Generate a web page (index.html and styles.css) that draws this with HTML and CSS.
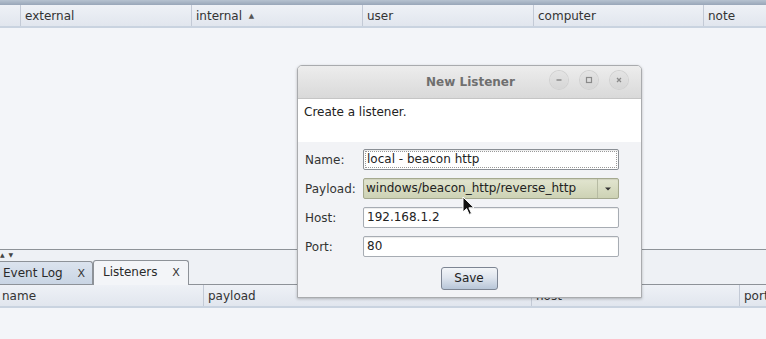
FILE: index.html
```html
<!DOCTYPE html>
<html>
<head>
<meta charset="utf-8">
<link rel="stylesheet" href="styles.css">
</head>
<body>
<div class="app">
  <div class="topstrip"></div>
  <div class="thead top">
    <div class="col c0"></div>
    <div class="col c1">external</div>
    <div class="col c2">internal <span class="sort">▲</span></div>
    <div class="col c3">user</div>
    <div class="col c4">computer</div>
    <div class="col c5">note</div>
  </div>
  <div class="upper"></div>
  <div class="splitter"><span class="arrows">▲ ▼</span></div>
  <div class="tabs">
    <div class="tab inactive">Event Log <span class="x">X</span></div>
    <div class="tab active">Listeners <span class="x">X</span></div>
  </div>
  <div class="thead bottom">
    <div class="col d1">name</div>
    <div class="col d2">payload</div>
    <div class="col d3">host</div>
    <div class="col d4">port</div>
  </div>
  <div class="lower"></div>
</div>

<div class="dialog">
  <div class="titlebar">
    <div class="title">New Listener</div>
    <div class="wbtns">
      <span class="wbtn"><svg width="10" height="10" viewBox="0 0 10 10"><path d="M2.5 5h5" stroke="#8a8a8a" stroke-width="1.4"/></svg></span>
      <span class="wbtn"><svg width="10" height="10" viewBox="0 0 10 10"><rect x="2.5" y="2.5" width="5" height="5" fill="none" stroke="#8a8a8a" stroke-width="1.2"/></svg></span>
      <span class="wbtn"><svg width="10" height="10" viewBox="0 0 10 10"><path d="M3 3l4 4M7 3l-4 4" stroke="#8a8a8a" stroke-width="1.3"/></svg></span>
    </div>
  </div>
  <div class="desc">Create a listener.</div>
  <div class="form">
    <div class="row"><span class="lbl">Name:</span><span class="field focus">local - beacon http</span></div>
    <div class="row"><span class="lbl">Payload:</span><span class="field combo">windows/beacon_http/reverse_http<span class="drop"><svg width="8" height="6" viewBox="0 0 8 6"><path d="M1 1.5h6L4 4.5z" fill="#333"/></svg></span></span></div>
    <div class="row"><span class="lbl">Host:</span><span class="field">192.168.1.2</span></div>
    <div class="row"><span class="lbl">Port:</span><span class="field">80</span></div>
    <div class="actions"><span class="btn">Save</span></div>
  </div>
</div>

<svg class="cursor" width="14" height="20" viewBox="0 0 14 20"><path d="M1 1v15l3.6-3.4 2.6 5.8 2.3-1-2.6-5.6H12z" fill="#111" stroke="#fff" stroke-width="1"/></svg>
</body>
</html>
```

FILE: styles.css
```css
html, body {
  margin: 0;
  padding: 0;
}
body {
  width: 766px;
  height: 339px;
  overflow: hidden;
  background: #f2f4f8;
  font-family: "DejaVu Sans", "Liberation Sans", sans-serif;
  font-size: 12px;
  color: #2a2a2a;
  position: relative;
}
.app {
  display: flex;
  flex-direction: column;
  height: 339px;
}
.topstrip {
  height: 5px;
  background: linear-gradient(#b6c2d0, #98a6b8);
  flex: none;
}
.thead {
  display: flex;
  flex: none;
  background: linear-gradient(#eef1f6, #e1e6ee);
  border-bottom: 2px solid #c9d3e0;
  box-sizing: border-box;
}
.thead.top { height: 23px; }
.thead.bottom { height: 23px; }
.col {
  box-sizing: border-box;
  border-right: 1px solid #c3cad6;
  padding-left: 4px;
  line-height: 23px;
  white-space: nowrap;
  overflow: hidden;
  color: #333;
}
.c0 { width: 21px; }
.c1 { width: 171px; }
.c2 { width: 171px; }
.c3 { width: 171px; }
.c4 { width: 170px; }
.c5 { flex: 1; border-right: none; }
.sort { font-size: 7px; color: #555; position: relative; top: -2px; margin-left: 3px; }
.d1 { width: 204px; padding-left: 2px; }
.d2 { width: 328px; }
.d3 { width: 208px; }
.d4 { flex: 1; border-right: none; }
.upper {
  height: 221px;
  flex: none;
  background: #f3f5f9;
  border-bottom: 1px solid #8d9298;
}
.splitter {
  height: 9px;
  flex: none;
  background: #eef1f5;
  position: relative;
}
.arrows {
  font-size: 6px;
  color: #444;
  position: absolute;
  left: 0;
  top: 1px;
  letter-spacing: 1px;
}
.tabs {
  height: 26px;
  flex: none;
  display: flex;
  align-items: flex-end;
  background: #eef1f5;
  border-bottom: 1px solid #8d9298;
  box-sizing: border-box;
}
.tab {
  box-sizing: border-box;
  height: 24px;
  line-height: 22px;
  padding-left: 3px;
  border: 1px solid #8d9298;
  border-bottom: none;
  border-radius: 3px 3px 0 0;
  white-space: nowrap;
}
.tab.inactive {
  width: 93px;
  height: 23px;
  background: linear-gradient(#dbe3ee, #c9d5e4);
  border-left: none;
  border-radius: 0 3px 0 0;
}
.tab.active {
  width: 96px;
  height: 25px;
  padding-left: 9px;
  background: #f3f5f8;
  margin-bottom: -1px;
}
.x { margin-left: 11px; font-size: 11px; color: #333; }
.lower {
  flex: 1;
  background: #f3f5f9;
}

.dialog {
  position: absolute;
  left: 297px;
  top: 65px;
  width: 345px;
  height: 233px;
  box-sizing: border-box;
  border: 1px solid #a9abae;
  border-radius: 5px 5px 0 0;
  background: #f2f3f6;
  box-shadow: 0 1px 3px rgba(0,0,0,0.25);
  display: flex;
  flex-direction: column;
  overflow: hidden;
}
.titlebar {
  height: 32px;
  flex: none;
  background: linear-gradient(#ededed, #d9d9d9);
  border-bottom: 1px solid #c5c5c5;
  position: relative;
  display: flex;
  align-items: center;
  justify-content: center;
}
.title {
  font-weight: bold;
  color: #6f6f6f;
  font-size: 12px;
  margin-left: 2px;
}
.wbtns {
  position: absolute;
  right: 13px;
  top: 5px;
  display: flex;
  gap: 12px;
}
.wbtn {
  width: 18px;
  height: 18px;
  border-radius: 50%;
  background: linear-gradient(#e4e4e4, #d6d6d6);
  box-shadow: 0 0 0 1px #d0d0d0;
  display: flex;
  align-items: center;
  justify-content: center;
}
.desc {
  height: 43px;
  flex: none;
  background: #fff;
  padding: 6px 0 0 6px;
  box-sizing: border-box;
  color: #222;
}
.form {
  flex: 1;
  padding: 7px 22px 0 7px;
  display: flex;
  flex-direction: column;
  gap: 8px;
}
.row {
  display: flex;
  align-items: center;
  height: 21px;
}
.lbl {
  width: 58px;
  color: #333;
}
.field {
  flex: 1;
  height: 21px;
  box-sizing: border-box;
  border: 1px solid #a7acb3;
  border-radius: 2px;
  background: #fff;
  padding-left: 3px;
  line-height: 19px;
  color: #222;
  box-shadow: inset 0 1px 1px rgba(0,0,0,0.08);
  position: relative;
}
.field.focus {
  border: 1px solid #8a8f95;
  outline: 1px dotted #999;
  outline-offset: -3px;
}
.field.combo {
  background: linear-gradient(#e2e5d0, #cdd2b4);
  border-color: #a5a98f;
  padding-left: 2px;
}
.drop {
  position: absolute;
  right: 0;
  top: 0;
  width: 20px;
  height: 19px;
  border-left: 1px solid #b7bba3;
  display: flex;
  align-items: center;
  justify-content: center;
}
.actions {
  display: flex;
  justify-content: center;
  margin-top: 2px;
}
.btn {
  width: 57px;
  height: 23px;
  box-sizing: border-box;
  border: 1px solid #7d8593;
  border-radius: 3px;
  background: linear-gradient(#f3f5f8 0%, #dfe5ee 45%, #b8c6d8 100%);
  text-align: center;
  line-height: 21px;
  color: #222;
  margin-left: 14px;
}
.cursor {
  position: absolute;
  left: 462px;
  top: 196px;
}
```
